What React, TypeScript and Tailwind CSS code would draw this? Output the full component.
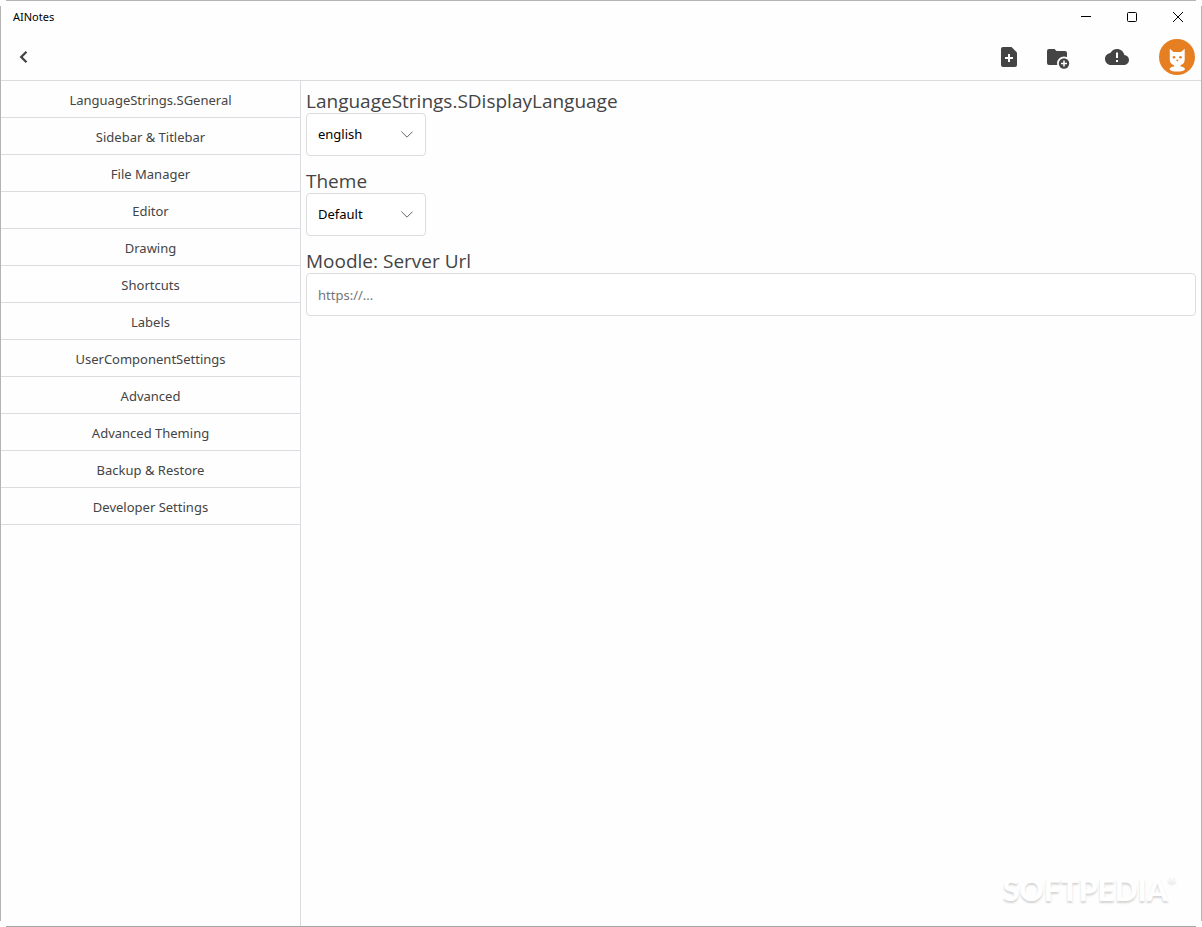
import React, { useState } from "react";

const sections = [
  "LanguageStrings.SGeneral",
  "Sidebar & Titlebar",
  "File Manager",
  "Editor",
  "Drawing",
  "Shortcuts",
  "Labels",
  "UserComponentSettings",
  "Advanced",
  "Advanced Theming",
  "Backup & Restore",
  "Developer Settings",
];

interface FieldLabelProps {
  htmlFor: string;
  children: React.ReactNode;
}

const FieldLabel = ({ htmlFor, children }: FieldLabelProps) => (
  <label
    htmlFor={htmlFor}
    className="block h-[27px] pt-1 font-['Open_Sans',sans-serif] text-[19px] leading-[23px]"
  >
    {children}
  </label>
);

interface SelectFieldProps {
  id: string;
  label: string;
  options: string[];
}

const SelectField = ({ id, label, options }: SelectFieldProps) => {
  const [value, setValue] = useState(options[0]);

  return (
    <div>
      <FieldLabel htmlFor={id}>{label}</FieldLabel>
      <div className="relative w-[120px]">
        <select
          id={id}
          value={value}
          onChange={(e) => setValue(e.target.value)}
          className="block w-full h-[43px] appearance-none rounded border border-[#dcdcdf] bg-white pl-[11px] pr-8 pt-px text-[13px] text-black"
        >
          {options.map((option) => (
            <option key={option}>{option}</option>
          ))}
        </select>
        <svg
          viewBox="0 0 12 7"
          className="pointer-events-none absolute right-[13px] top-[18px] h-[7px] w-3"
          fill="none"
          stroke="#666"
        >
          <path d="M.4 .6 6 6.2 11.6 .6" />
        </svg>
      </div>
    </div>
  );
};

const TitleBar = () => (
  <div className="flex h-[33px] items-center justify-between">
    <span className="pl-3 text-[11px] text-black">AINotes</span>
    <div className="flex h-full pb-[2px] text-black">
      <button aria-label="Minimize" className="flex w-[46px] items-center justify-center">
        <svg viewBox="0 0 12 12" className="size-3" stroke="currentColor">
          <path d="M1 5.5h10" />
        </svg>
      </button>
      <button aria-label="Maximize" className="flex w-[46px] items-center justify-center">
        <svg viewBox="0 0 12 12" className="size-3" fill="none" stroke="currentColor">
          <rect x="1.5" y="1.5" width="9" height="9" rx="1" />
        </svg>
      </button>
      <button aria-label="Close" className="flex w-[46px] items-center justify-center">
        <svg viewBox="0 0 12 12" className="size-3" stroke="currentColor">
          <path d="M1 1l10 10M11 1 1 11" />
        </svg>
      </button>
    </div>
  </div>
);

const Toolbar = () => (
  <div className="flex h-[47px] items-center justify-between border-b border-[#dcdce0] pl-[11px] pr-[6px]">
    <button aria-label="Back" className="flex size-6 items-center justify-center">
      <svg viewBox="0 0 24 24" className="size-6" fill="none" stroke="currentColor" strokeWidth="2.3">
        <path d="M14.500 6.700 9.200 12l5.300 5.300" />
      </svg>
    </button>
    <div className="flex items-center">
      <button aria-label="New file" className="mr-[25px]">
        <svg viewBox="0 0 24 24" className="size-6">
          <path
            d="M6 2h8.500l5.500 5.500V20a2 2 0 0 1-2 2H6a2 2 0 0 1-2-2V4a2 2 0 0 1 2-2z"
            fill="currentColor"
          />
          <path d="M12 9v8M8 13h8" stroke="#fff" strokeWidth="2" />
        </svg>
      </button>
      <button aria-label="New folder" className="mr-[35px]">
        <svg viewBox="0 0 24 24" className="size-6">
          <path
            d="M3 4h5.500l2 2H19a2 2 0 0 1 2 2v5H14v7H3a2 2 0 0 1-2-2V6a2 2 0 0 1 2-2z"
            fill="currentColor"
          />
          <circle cx="18" cy="18.500" r="7" fill="#fefefe" />
          <circle cx="18" cy="18.500" r="5.200" fill="currentColor" />
          <path d="M18 15.500v6M15 18.500h6" stroke="#fff" strokeWidth="1.500" />
        </svg>
      </button>
      <button aria-label="Sync status" className="mr-[30px]">
        <svg viewBox="0 0 24 24" className="size-6">
          <path
            d="M19.350 10.040C18.670 6.590 15.640 4 12 4 9.110 4 6.600 5.640 5.350 8.040 2.340 8.360 0 10.910 0 14c0 3.310 2.690 6 6 6h13c2.760 0 5-2.240 5-5 0-2.640-2.050-4.780-4.650-4.960z"
            fill="currentColor"
          />
          <path d="M12 7.500v5.500M12 15v2" stroke="#fff" strokeWidth="2" />
        </svg>
      </button>
      <button aria-label="Account">
        <svg viewBox="0 0 36 36" className="size-9">
          <circle cx="18" cy="18" r="18" fill="#e67e22" />
          <path
            d="M10.800 9.800 14.500 13h7.500l3.700-3.200v10.700c0 3-1.500 4.800-4.200 5.700v1.300c2.600.3 4.500 1.300 4.500 2.500 0 1.600-3.500 2.600-7.700 2.600s-7.700-1-7.700-2.600c0-1.200 1.900-2.200 4.500-2.500v-1.300c-2.800-.9-4.300-2.700-4.300-5.700z"
            fill="#fff"
          />
          <g fill="#e67e22">
            <circle cx="15" cy="18.200" r="1.300" />
            <circle cx="21.500" cy="18.200" r="1.300" />
            <path d="M16.800 20.800h3l-1.500 1.600z" />
          </g>
        </svg>
      </button>
    </div>
  </div>
);

const App = () => {
  const [serverUrl, setServerUrl] = useState("");

  return (
    <div className="relative flex min-h-screen flex-col bg-[#fefefe] font-['Noto_Sans','Open_Sans',sans-serif] text-[#444]">
      {/* window frame, open at the corners */}
      <div className="mx-[6px] h-px bg-[#b4b4b4]" />
      <div className="flex flex-1">
        <div className="my-[5px] w-px bg-[#b4b4b4]" />

        <div className="flex min-w-0 flex-1 flex-col">
          <TitleBar />
          <Toolbar />

          <div className="flex flex-1">
            <nav className="w-[300px] shrink-0 border-r border-[#dcdce0]">
              {sections.map((section) => (
                <button
                  key={section}
                  className="block h-[37px] w-full border-b border-[#dcdce0] pt-[3px] text-[13px]"
                >
                  {section}
                </button>
              ))}
            </nav>

            <main className="flex min-w-0 flex-1 flex-col gap-[10px] p-[5px]">
              <SelectField
                id="language"
                label="LanguageStrings.SDisplayLanguage"
                options={["english", "deutsch"]}
              />
              <SelectField id="theme" label="Theme" options={["Default", "Dark"]} />
              <div>
                <FieldLabel htmlFor="moodle">Moodle: Server Url</FieldLabel>
                <input
                  id="moodle"
                  type="text"
                  value={serverUrl}
                  onChange={(e) => setServerUrl(e.target.value)}
                  placeholder="https://..."
                  className="block h-[43px] w-full rounded border border-[#dcdcdf] bg-white px-[11px] text-[13px] placeholder:text-[#757575]"
                />
              </div>
            </main>
          </div>
        </div>

        <div className="my-[5px] w-px bg-[#b4b4b4]" />
      </div>
      <div className="mx-[6px] h-px bg-[#a6a6a6]" />

      {/* watermark */}
      <div className="pointer-events-none absolute bottom-5 right-[26px] flex items-start font-['Lato',sans-serif] font-black text-white [text-shadow:0_2px_2px_#d4d4d4]">
        <span className="text-[30px] leading-9">SOFTPEDIA</span>
        <span className="text-[10px] leading-4">®</span>
      </div>
    </div>
  );
};

export default App;
